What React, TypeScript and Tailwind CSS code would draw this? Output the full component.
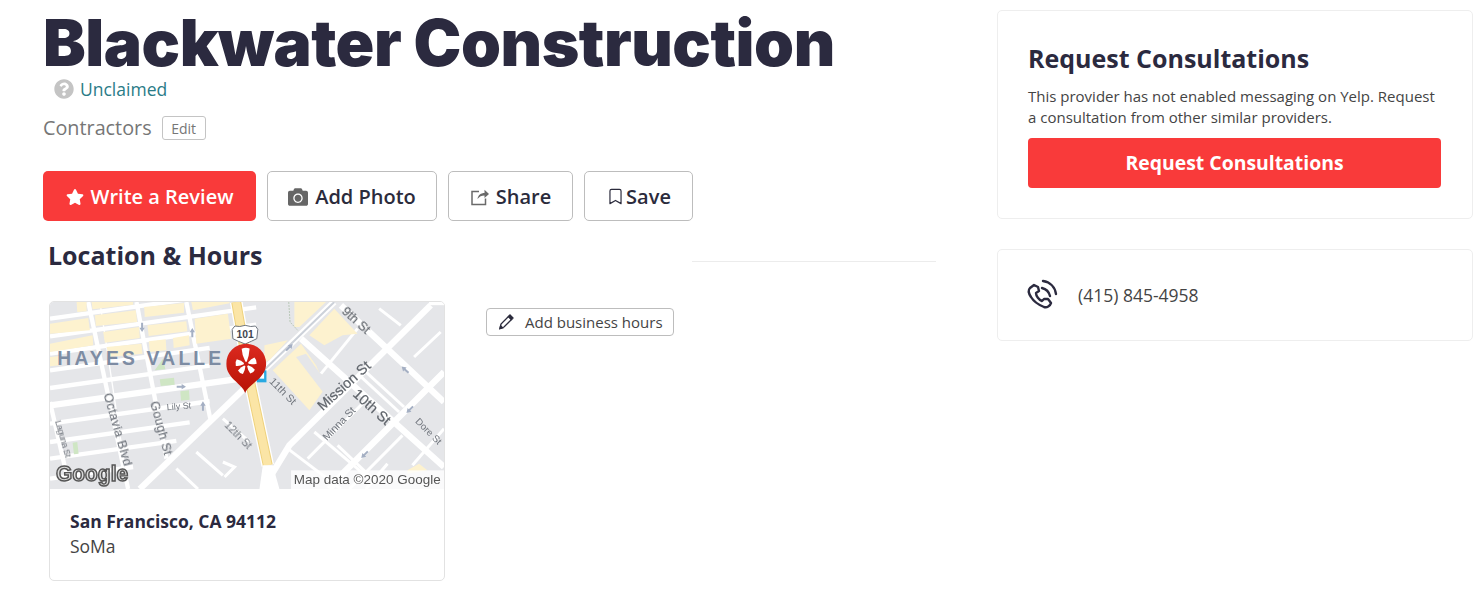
import React from "react";
import { FaStar, FaCamera, FaQuestionCircle } from "react-icons/fa";
import { Bookmark } from "lucide-react";

function Arrow({ x, y, r }: { x: number; y: number; r: number }) {
  return <path transform={`translate(${x} ${y}) rotate(${r})`} d="M-3 14 V-1 H-8 L0 -14 L8 -1 H3 V14Z" fill="#a4afc3" />;
}

function Petal({ r, len, w }: { r: number; len: number; w: number }) {
  return (
    <path
      transform={`translate(590 186) rotate(${r})`}
      d={`M-2 -7 Q-${w} -${len * 0.6} -${w} -${len} Q0 -${len + 5} ${w} -${len} Q${w * 0.8} -${len * 0.5} 2 -7Z`}
      fill="#ffffff"
    />
  );
}

function MapArt() {
  const slope = (c: number, x2 = 620) => `M0 ${c} L${x2} ${c - x2 * 0.14}`;
  const thin = [
    slope(50), slope(103), slope(155), slope(205, 480), slope(258, 480), slope(365, 480), slope(420, 420), slope(470, 380), slope(530, 250),
    "M115 0 L235 561", "M260 0 L350 470", "M410 0 L482 350", "M0 300 L55 540",
  ];
  const diagThin = [
    "M990 20 L1055 70", "M925 80 L815 215", "M945 205 L1065 315", "M925 215 L1050 330", "M1175 90 L1095 165",
    "M955 290 L775 470", "M715 440 L875 561", "M795 390 L960 530", "M865 430 L970 530", "M1060 400 L900 561",
    "M1185 380 L1090 490", "M1015 485 L950 561", "M520 350 L600 420", "M440 450 L520 520", "M380 500 L445 561",
    "M520 480 L555 495 L525 525",
  ];
  const big = [
    slope(310, 600),
    "M855 0 L270 561",
    "M1145 10 L720 430 L640 561",
    "M755 110 L1185 495",
    "M875 10 L1185 300",
    "M1185 210 L885 510 L840 561",
    "M1185 0 L1140 0",
  ];
  return (
    <svg viewBox="0 0 1185 561" className="block w-full h-[187px] blur-[0.45px]" preserveAspectRatio="none">
      <defs>
        <linearGradient id="pin" x1="0" y1="0" x2="0" y2="1">
          <stop offset="0" stopColor="#dc2a20" />
          <stop offset="1" stopColor="#b71204" />
        </linearGradient>
      </defs>
      <rect width="1185" height="561" fill="#e5e6e9" />
      <g stroke="#ffffff" fill="none" strokeWidth="13">
        {thin.map((d) => <path key={d} d={d} />)}
      </g>
      <g stroke="#ffffff" fill="none" strokeWidth="9">
        {diagThin.map((d) => <path key={d} d={d} />)}
      </g>
      <g stroke="#ffffff" fill="none" strokeWidth="19">
        {big.map((d) => <path key={d} d={d} />)}
      </g>
      <path d="M150 0 L235 561" stroke="#ffffff" strokeWidth="4" fill="none" />
      <g fill="#fdf2cf">
        <polygon points="80,0 110,0 110,28 82,30" />
        <polygon points="125,0 250,0 250,8 128,22" />
        <polygon points="425,0 540,0 540,4 430,25" />
        <polygon points="0,65 115,48 120,85 0,95" />
        <polygon points="135,40 258,25 262,60 138,72" />
        <polygon points="283,15 403,3 403,32 285,45" />
        <polygon points="0,125 128,100 130,130 0,150" />
        <polygon points="160,90 268,75 270,108 165,122" />
        <polygon points="293,70 410,58 413,88 297,102" />
        <polygon points="435,50 535,35 545,110 440,125" />
        <polygon points="170,135 275,125 278,155 178,165" />
        <polygon points="297,118 348,112 350,145 300,150" />
        <polygon points="370,108 418,100 420,130 372,138" />
        <polygon points="0,165 30,162 30,190 0,193" />
        <polygon points="735,0 830,0 750,75 735,75" />
        <polygon points="780,100 855,20 925,95 880,100 825,130" />
        <polygon points="670,205 755,125 800,190 830,255 780,325" />
        <polygon points="645,130 715,115 660,175 645,180" />
        <polygon points="1075,505 1110,485 1135,505 1075,515" />
      </g>
      <polygon points="740,165 770,155 845,260 825,275" fill="#e5e6e9" />
      <path d="M718 0 L722 60 L745 85" stroke="#b9c8b8" strokeWidth="3" strokeDasharray="6 3" fill="none" />
      <g fill="#cfe6c4">
        <polygon points="315,205 340,170 347,202" />
        <polygon points="330,232 373,227 375,248 333,252" />
        <polygon points="392,268 418,265 420,293 394,296" />
        <polygon points="68,422 82,420 86,455 72,457" />
      </g>
      <path d="M855 0 L640 208" stroke="#ccd1d9" strokeWidth="6" fill="none" />
      <path d="M560 0 L605 255 L655 490" stroke="#ffffff" strokeWidth="38" fill="none" />
      <path d="M560 0 L605 255 L655 490" stroke="#efd27c" strokeWidth="30" fill="none" />
      <path d="M560 0 L605 255 L655 490" stroke="#fbe5a6" strokeWidth="24" fill="none" />
      <path d="M640 490 L670 490 L690 561 L630 561Z" fill="#ffffff" />
      <path d="M556 72 Q570 76 587 70 Q605 76 618 72 L625 82 L622 110 Q606 118 587 126 Q565 118 550 110 L548 82Z" fill="#ffffff" stroke="#6f7680" strokeWidth="3" />
      <text x="587" y="109" fontSize="31" fontFamily="Liberation Sans" fontWeight="700" fill="#3f4650" textAnchor="middle">101</text>
      <rect x="622" y="205" width="29" height="36" fill="#29a9e1" />
      <rect x="630" y="212" width="14" height="18" fill="#fff" />
      <g fontFamily="Liberation Sans" fill="#70757d">
        <text x="22" y="190" fontSize="58" fontWeight="700" fill="#7d8ca3" textLength="493" lengthAdjust="spacing">HAYES VALLE</text>
        <text fontSize="38" stroke="#70757d" strokeWidth="0.5" transform="translate(160 278) rotate(74)" textLength="225">Octavia Blvd</text>
        <text fontSize="38" stroke="#70757d" strokeWidth="0.5" transform="translate(300 302) rotate(75)" textLength="165">Gough St</text>
        <text fontSize="28" transform="translate(14 358) rotate(74)" textLength="115">Laguna St</text>
        <text fontSize="27" x="352" y="325" transform="rotate(-5 352 325)">Lily St</text>
        <text fontSize="32" transform="translate(658 240) rotate(45)">11th St</text>
        <text fontSize="32" transform="translate(522 372) rotate(45)">12th St</text>
        <text fontSize="32" transform="translate(833 418) rotate(-46)">Minna St</text>
        <text fontSize="29" transform="translate(1097 360) rotate(45)">Dore St</text>
        <text fontSize="43" fill="#5f646b" stroke="#5f646b" strokeWidth="0.6" transform="translate(820 328) rotate(-42)">Mission St</text>
        <text fontSize="43" fill="#5f646b" stroke="#5f646b" strokeWidth="0.6" transform="translate(908 280) rotate(42)">10th St</text>
        <text fontSize="38" fill="#5f646b" stroke="#5f646b" strokeWidth="0.6" transform="translate(875 32) rotate(42)">9th St</text>
      </g>
      <Arrow x={277} y={76} r={180} />
      <Arrow x={428} y={92} r={0} />
      <Arrow x={460} y={312} r={0} />
      <Arrow x={395} y={254} r={90} />
      <Arrow x={720} y={136} r={45} />
      <Arrow x={1068} y={203} r={-48} />
      <Arrow x={1082} y={323} r={225} />
      <Arrow x={946} y={458} r={225} />
      <path d="M587 273 C580 245 530 230 530 185 A60 60 0 1 1 650 185 C650 230 597 245 587 273Z" fill="url(#pin)" />
      <Petal r={-2} len={46} w={12} />
      <Petal r={-82} len={30} w={10} />
      <Petal r={70} len={30} w={10} />
      <Petal r={-145} len={30} w={9} />
      <Petal r={140} len={30} w={9} />
      <text x="18" y="538" fontSize="64" fontFamily="Liberation Sans" fontWeight="700" fill="#d9d9d9" stroke="#555555" strokeWidth="4.5" textLength="217" lengthAdjust="spacingAndGlyphs">Google</text>
      <rect x="725" y="505" width="460" height="56" fill="#ffffff" opacity="0.8" />
      <text x="733" y="545" fontSize="37" fontFamily="Liberation Sans" fill="#555" textLength="442" lengthAdjust="spacingAndGlyphs">Map data ©2020 Google</text>
    </svg>
  );
}

function ShareIcon() {
  return (
    <svg viewBox="0 0 20 20" className="w-[20px] h-[20px] text-[#6a6a6a]" fill="none" stroke="currentColor" strokeWidth="1.5">
      <path d="M15.5 11.5 V17.5 H2 V4.5 H9" />
      <path d="M7.5 12 C8 8 11 6 14.5 6 V2.8 L19 7 L14.5 11 V8.5 C11.5 8.5 9.5 9.5 7.5 12Z" fill="currentColor" stroke="none" />
    </svg>
  );
}

function PencilIcon() {
  return (
    <svg viewBox="0 0 16 16" className="w-[16px] h-[16px] text-[#2b2b3c]" fill="none" stroke="currentColor" strokeWidth="1.3">
      <path d="M2 14.5 L3 10 L10.5 2.5 L13.5 5.5 L6 13 Z" />
      <path d="M10.5 2.5 L12 1 L15 4 L13.5 5.5 Z" fill="currentColor" />
      <path d="M2 14.5 L2.6 11.8 L4.6 13.8 Z" fill="currentColor" />
    </svg>
  );
}

function PhoneIcon() {
  return (
    <svg viewBox="0 0 42 40" className="w-[42px] h-[40px] text-[#2b2a3f]" fill="none" stroke="currentColor" strokeWidth="2.4" strokeLinecap="round" strokeLinejoin="round">
      <path d="M12 10 L8 13 C6 15 7 19 9 22 C12 27 17 30 22 32 C25 33 28 31 29 28 L26 24 L22 24 L20 26 C17 25 14 21 14 18 L17 16 L16 12 Z" />
      <path d="M21 6 C28 7 33 12 34 19" />
      <path d="M20 13 C24 14 27 17 28 21" />
    </svg>
  );
}

const btn = "h-[50px] rounded-[5px] flex items-center justify-center text-[20px] font-semibold pt-[1px]";
const outline = "border border-[#bdbdbd] text-[#2b2b3c] bg-white";

export default function App() {
  return (
    <div className="flex w-[1482px] h-[616px] overflow-hidden bg-white font-['Open_Sans',sans-serif] text-[#2b2b3c]">
      <div className="w-[893px] ml-[43px] shrink-0">
        <h1 className="font-['Inter',sans-serif] font-black text-[64px] leading-[66px] mt-[10px] h-[66px] tracking-[-0.45px] text-[#2b2a3f] whitespace-nowrap">Blackwater Construction</h1>
        <div className="flex items-center ml-[11px] mt-[1px] h-[24px]">
          <FaQuestionCircle className="text-[#c4c4c4] text-[20px]" />
          <span className="ml-[6px] text-[17.5px] text-[#2a7b87]">Unclaimed</span>
        </div>
        <div className="flex items-center mt-[15px] h-[24px]">
          <span className="text-[19.8px] text-[#767676]">Contractors</span>
          <span className="ml-[10px] h-[24px] w-[44px] border border-[#c4c4c4] rounded-[3px] flex items-center justify-center text-[14px] text-[#767676]">Edit</span>
        </div>
        <div className="flex gap-[11px] mt-[31px]">
          <div className={`${btn} w-[213px] bg-[#f93a3a] text-white`}>
            <FaStar className="text-[18px] mr-[7px]" />
            Write a Review
          </div>
          <div className={`${btn} ${outline} w-[170px]`}>
            <FaCamera className="text-[20px] text-[#666] mr-[7px]" />
            Add Photo
          </div>
          <div className={`${btn} ${outline} w-[125px]`}>
            <ShareIcon />
            <span className="ml-[6px]">Share</span>
          </div>
          <div className={`${btn} ${outline} w-[109px]`}>
            <Bookmark className="w-[19px] h-[21px] text-[#2b2b3c] mr-[1px]" strokeWidth={1.5} />
            Save
          </div>
        </div>
        <div className="flex h-[21px] mt-[20px] ml-[5px]">
          <h2 className="w-[644px] -mt-[1px] text-[25px] leading-[30px] font-bold text-[#2b2a3f]">Location &amp; Hours</h2>
          <div className="flex-1 h-px bg-[#ececec] self-end" />
        </div>
        <div className="flex items-start ml-[6px] mt-[39px]">
          <div className="w-[396px] h-[280px] border border-[#e2e2e2] rounded-[5px] overflow-hidden">
            <MapArt />
            <div className="pl-[20px] pt-[20px]">
              <div className="text-[17.5px] leading-[25px] font-bold text-[#2b2a3f]">San Francisco, CA 94112</div>
              <div className="text-[17.5px] leading-[25px] text-[#444]">SoMa</div>
            </div>
          </div>
          <div className="ml-[41px] mt-[7px] w-[188px] h-[28px] border border-[#bdbdbd] rounded-[4px] flex items-center pl-[11px] text-[15px] text-[#444]">
            <PencilIcon />
            <span className="ml-[11px]">Add business hours</span>
          </div>
        </div>
      </div>
      <div className="ml-[61px] w-[476px] shrink-0 pt-[10px]">
        <div className="h-[209px] border border-[#eeeeee] rounded-[5px] px-[30px] pt-[30px]">
          <div className="text-[25px] leading-[34px] font-bold text-[#2b2a3f]">Request Consultations</div>
          <p className="mt-[11px] text-[15px] leading-[21px] text-[#444]">This provider has not enabled messaging on Yelp. Request a consultation from other similar providers.</p>
          <div className="mt-[10px] w-[413px] h-[50px] rounded-[4px] bg-[#f93a3a] text-white text-[19.4px] font-bold flex items-center justify-center">Request Consultations</div>
        </div>
        <div className="mt-[30px] h-[92px] border border-[#eeeeee] rounded-[5px] flex items-center pl-[24px]">
          <PhoneIcon />
          <span className="ml-[14px] text-[17.5px] text-[#444]">(415) 845-4958</span>
        </div>
      </div>
    </div>
  );
}
